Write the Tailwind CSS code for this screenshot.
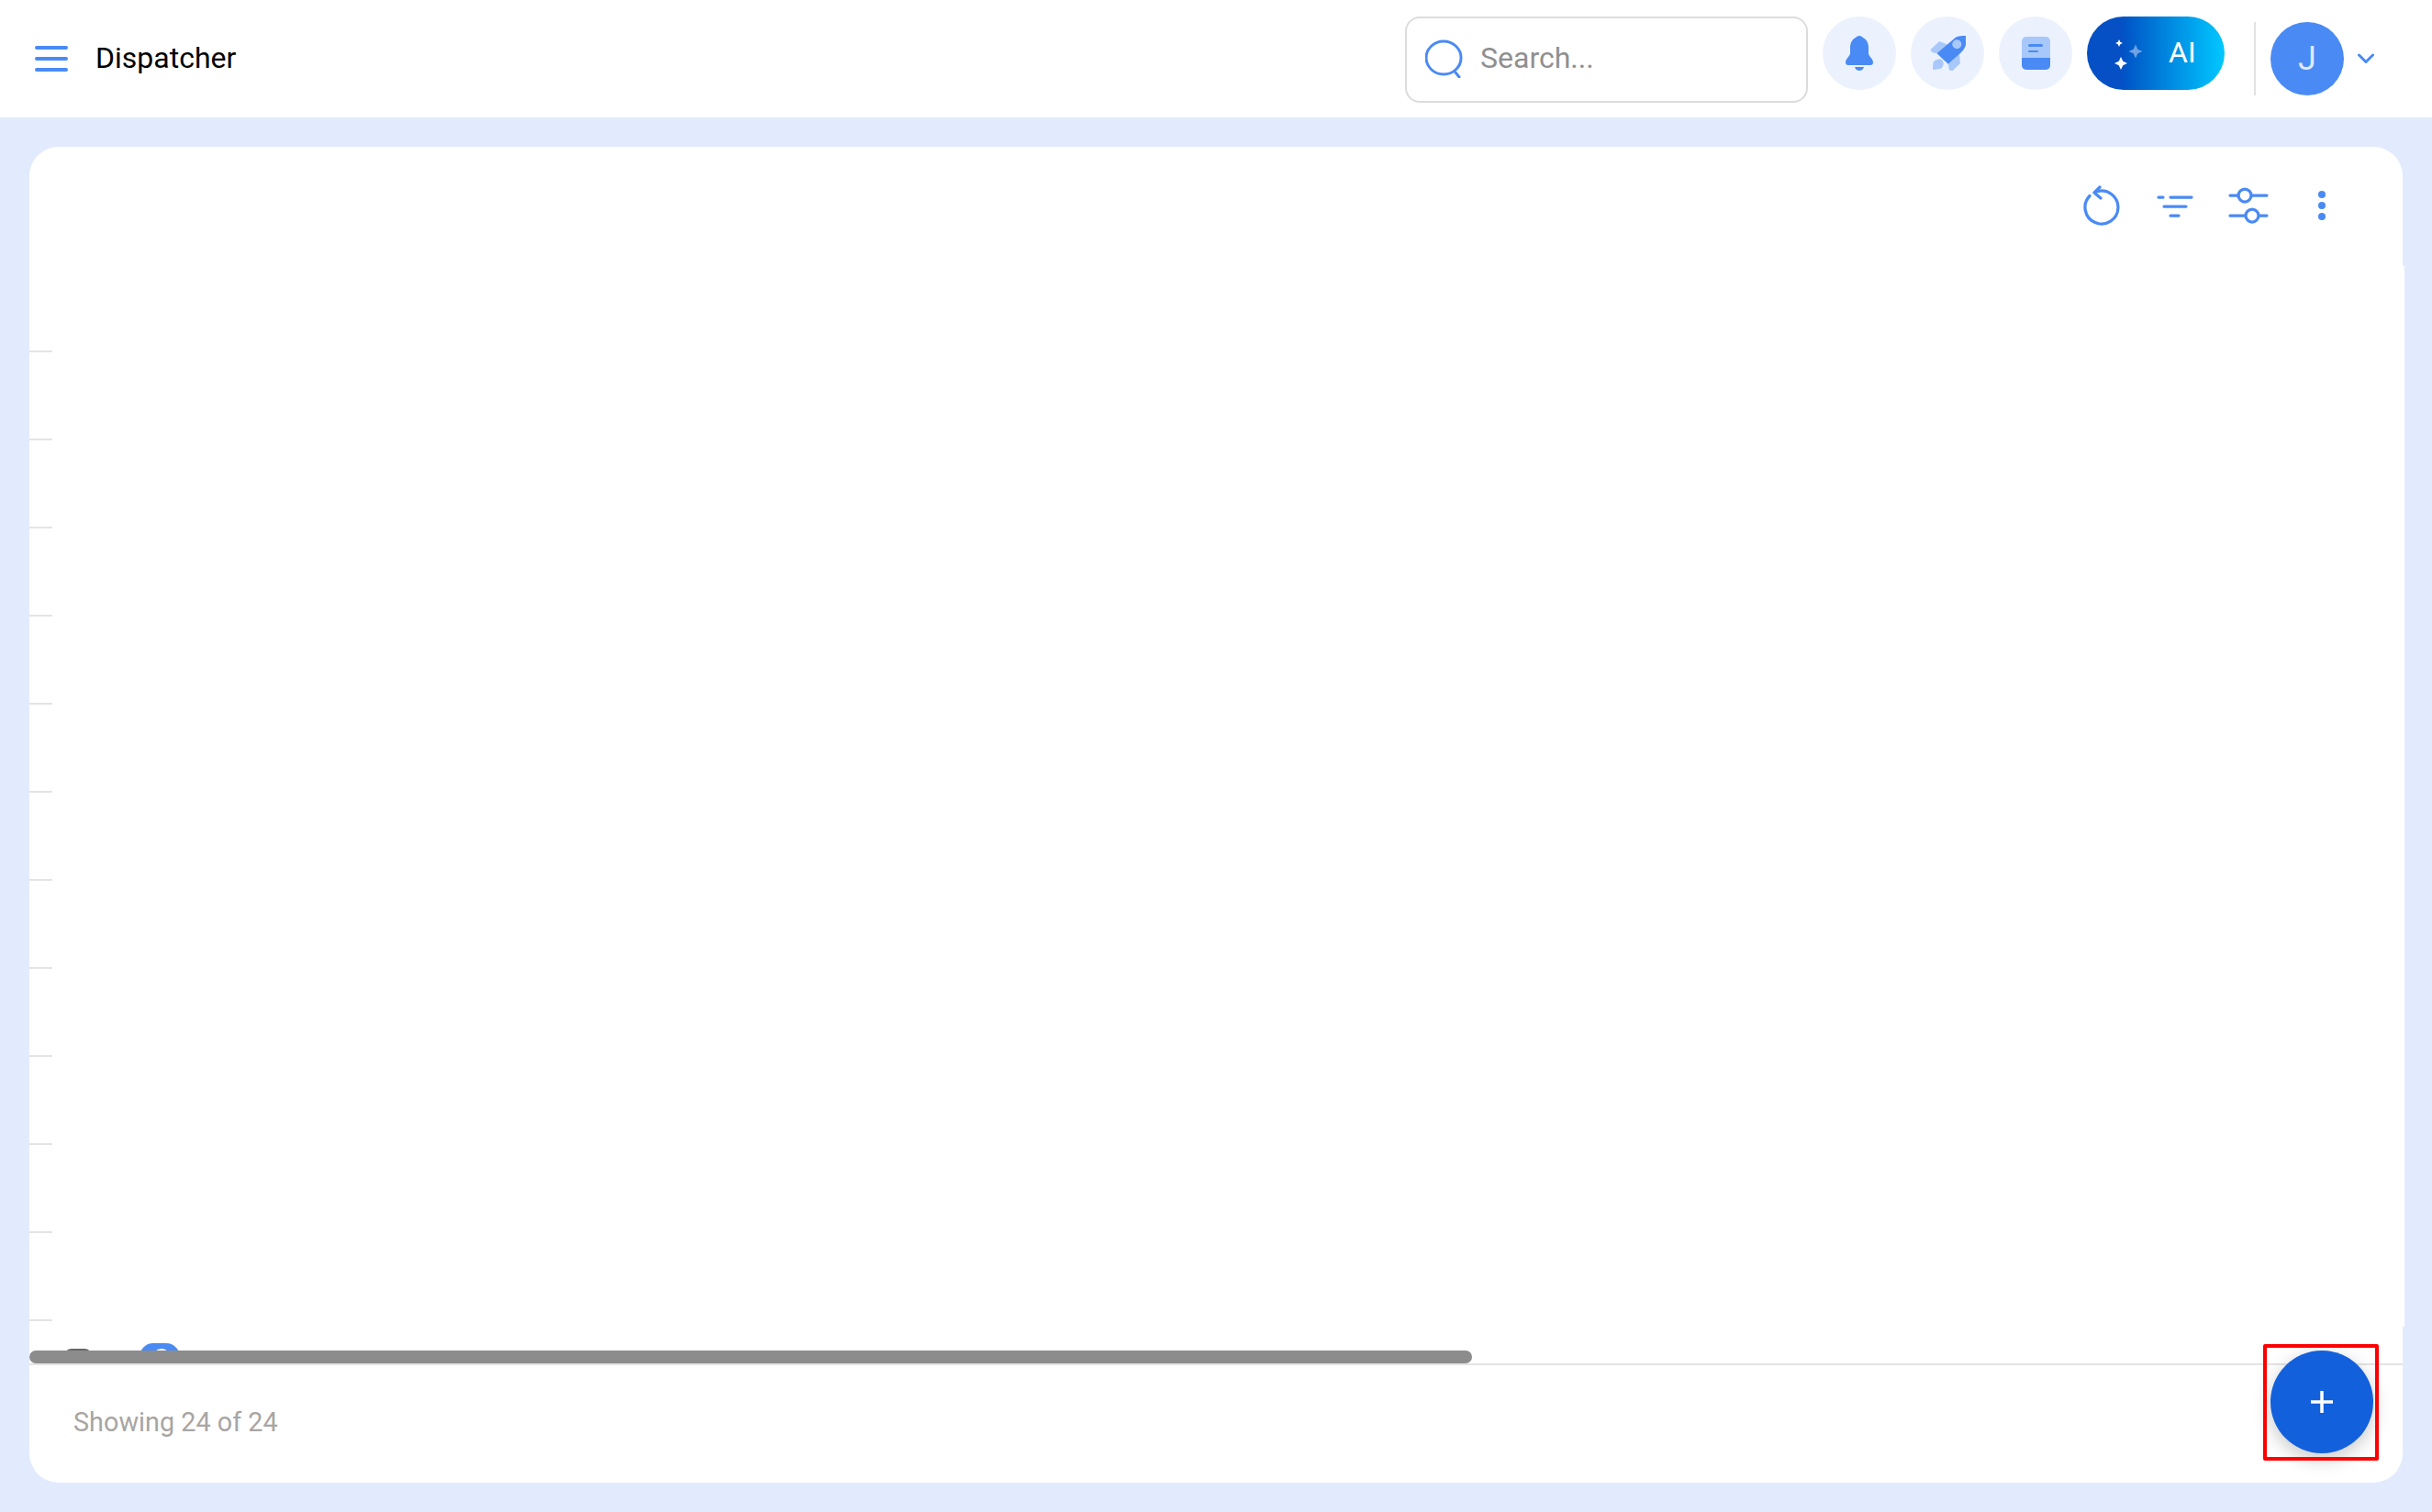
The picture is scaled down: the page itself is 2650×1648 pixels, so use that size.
<!DOCTYPE html>
<html lang="en">
<head>
    <meta charset="UTF-8">
    <meta name="viewport" content="width=device-width, initial-scale=1.0">
    <title>Dispatcher</title>
    <script src="https://cdn.jsdelivr.net/npm/@tailwindcss/browser@4"></script>
</head>
<body class="bg-[#e2ebfd] font-[Roboto,sans-serif] h-[1648px] overflow-hidden relative">
    <!-- header -->
    <header class="h-[128px] bg-white flex items-start pt-[18px] pl-[38px] pr-[63px]">
        <button class="w-[36px] mt-[32px] flex flex-col gap-[8px]">
            <span class="block h-[4px] rounded-full bg-[#4a8af4]"></span>
            <span class="block h-[4px] rounded-full bg-[#4a8af4]"></span>
            <span class="block h-[4px] rounded-full bg-[#4a8af4]"></span>
        </button>
        <div class="ml-[30px] h-[80px] text-[32px] leading-[90px] text-black">Dispatcher</div>

        <div class="ml-auto flex items-start">
            <div class="w-[439px] h-[94px] border-2 border-[#dcdcdc] rounded-[16px] flex items-center pl-[20px] pb-[2px]">
                <svg width="42" height="42" viewBox="0 0 42 42" fill="none" stroke="#4a8af4" stroke-width="3">
                    <ellipse cx="20" cy="20" rx="19" ry="18"/>
                    <path d="M33 36 L37 41" stroke-linecap="round"/>
                </svg>
                <span class="ml-[18px] -mt-[2px] text-[32px] text-[#8f8f8f]">Search...</span>
            </div>
            <div class="ml-[16px] w-[80px] h-[80px] rounded-full bg-[#ebf2fe] flex items-center justify-center">
                <svg width="30" height="38" viewBox="0 0 30 38" fill="#4a8af4">
                    <path d="M15 0 C17 0 18 1 19 2 C23 4 25 8 25 13 L25 19 C25 22 30 25 30 29 C30 31 29 32 27 32 L3 32 C1 32 0 31 0 29 C0 25 5 22 5 19 L5 13 C5 8 7 4 11 2 C12 1 13 0 15 0 Z"/>
                    <path d="M10 34 L20 34 C19 37 17 38 15 38 C13 38 11 37 10 34 Z"/>
                </svg>
            </div>
            <div class="ml-[16px] w-[80px] h-[80px] rounded-full bg-[#ebf2fe] flex items-center justify-center">
                <svg width="40" height="40" viewBox="0 0 40 40">
                    <path fill="#a9c8fa" d="M11.3 7 L1.5 16 L3.3 19.3 L10.3 20.3 L20.8 11 Z"/>
                    <path fill="#a9c8fa" d="M33 21 L34 31 L25.4 39.3 L21.9 38.3 L20.8 31.7 Z"/>
                    <path fill="#a9c8fa" d="M5 29.3 C7 27 11 26 13.8 27 C16 29 16 31 15.5 32.7 C15 35 13 37 12 37 L4.3 38.3 C4 35 4 32 5 29.3 Z"/>
                    <path fill="#4a8af4" d="M8.5 20.3 L28.9 2.7 C32 1 36 1 40 1 L40 11 C39 15 36 18 33 21 L20.8 31.7 Z"/>
                    <circle fill="#a9c8fa" cx="30.3" cy="10.3" r="5"/>
                </svg>
            </div>
            <div class="ml-[16px] w-[80px] h-[80px] rounded-full bg-[#ebf2fe] flex items-center justify-center">
                <div class="w-[31px] h-[36px] rounded-[5px] overflow-hidden bg-[#a9c8fa] flex flex-col">
                    <span class="block ml-[7px] mt-[8px] w-[16px] h-[2.5px] rounded-full bg-[#4a8af4]"></span>
                    <span class="block ml-[7px] mt-[4px] w-[11px] h-[2.5px] rounded-full bg-[#4a8af4]"></span>
                    <span class="block mt-auto h-[13px] bg-[#4a8af4]"></span>
                </div>
            </div>
            <div class="ml-[16px] w-[150px] h-[80px] rounded-full bg-linear-to-r from-[#0450c4] from-25% to-[#00c8ff] flex items-center">
                <svg class="ml-[25px] overflow-visible" width="36" height="38" viewBox="0 0 36 38">
                    <path fill="#ffffff" d="M10 4 L11.3 6.7 L14 8 L11.3 9.3 L10 12 L8.7 9.3 L6 8 L8.7 6.7 Z"/>
                    <path fill="#6fa3e6" d="M28 9.5 L30.3 14.7 L35.5 17 L30.3 19.3 L28 24.5 L25.7 19.3 L20.5 17 L25.7 14.7 Z"/>
                    <path fill="#ffffff" d="M12 23 L14.3 27.7 L19 30 L14.3 32.3 L12 37 L9.7 32.3 L5 30 L9.7 27.7 Z"/>
                </svg>
                <span class="ml-[28px] text-[32px] text-white leading-none -mt-[2px]">AI</span>
            </div>
            <div class="ml-[32px] mt-[6px] w-[2px] h-[80px] bg-[#e2e2e2]"></div>
            <div class="ml-[16px] mt-[6px] w-[80px] h-[80px] rounded-full bg-[#4a8af4] flex items-center justify-center text-[36px] text-[#dfe8fc]">J</div>
            <svg class="ml-[15px] mt-[40px]" width="18" height="12" viewBox="0 0 18 12" fill="none" stroke="#4a8af4" stroke-width="3" stroke-linecap="round" stroke-linejoin="round">
                <path d="M1.5 2 L9 9.5 L16.5 2"/>
            </svg>
        </div>
    </header>

    <!-- card -->
    <main class="pt-[32px] pl-[32px]">
        <div class="w-[2586px] h-[1456px] bg-white rounded-[32px] flex flex-col">
            <div class="h-[130px] flex items-start justify-end gap-[40px] pt-[40px] pr-[68px]">
                <svg width="40" height="48" viewBox="0 0 40 48" fill="none" stroke="#4a8af4" stroke-width="3.25" stroke-linecap="round" stroke-linejoin="round">
                    <path d="M7 13.5 A18 18 0 1 0 14 9"/>
                    <path d="M18 4 L12 10 L19 16"/>
                </svg>
                <svg width="40" height="48" viewBox="0 0 40 48" fill="none" stroke="#4a8af4" stroke-width="3.25" stroke-linecap="round">
                    <path d="M2 15 H7 M15 15 H38 M8 25 H32 M15 35 H24"/>
                </svg>
                <svg class="overflow-visible" width="40" height="48" viewBox="0 0 40 48" fill="none" stroke="#4a8af4" stroke-width="3.25" stroke-linecap="round">
                    <path d="M0 13 H9 M24 13 H40 M0 35 H16 M32 35 H40"/>
                    <circle cx="16" cy="13" r="7"/>
                    <circle cx="24" cy="35" r="7"/>
                </svg>
                <svg width="40" height="48" viewBox="0 0 40 48" fill="#4a8af4">
                    <circle cx="20" cy="12" r="4"/>
                    <circle cx="20" cy="24" r="4"/>
                    <circle cx="20" cy="36" r="4"/>
                </svg>
            </div>

            <!-- empty table rows, only the tick of each border shows -->
            <div class="w-[2588px] h-[1156px] bg-white flex flex-col">
                <div class="h-[94px] flex items-end"><span class="block w-[25px] h-[2px] bg-[#e4e4e4]"></span></div>
                <div class="h-[96px] flex items-end"><span class="block w-[25px] h-[2px] bg-[#e4e4e4]"></span></div>
                <div class="h-[96px] flex items-end"><span class="block w-[25px] h-[2px] bg-[#e4e4e4]"></span></div>
                <div class="h-[96px] flex items-end"><span class="block w-[25px] h-[2px] bg-[#e4e4e4]"></span></div>
                <div class="h-[96px] flex items-end"><span class="block w-[25px] h-[2px] bg-[#e4e4e4]"></span></div>
                <div class="h-[96px] flex items-end"><span class="block w-[25px] h-[2px] bg-[#e4e4e4]"></span></div>
                <div class="h-[96px] flex items-end"><span class="block w-[25px] h-[2px] bg-[#e4e4e4]"></span></div>
                <div class="h-[96px] flex items-end"><span class="block w-[25px] h-[2px] bg-[#e4e4e4]"></span></div>
                <div class="h-[96px] flex items-end"><span class="block w-[25px] h-[2px] bg-[#e4e4e4]"></span></div>
                <div class="h-[96px] flex items-end"><span class="block w-[25px] h-[2px] bg-[#e4e4e4]"></span></div>
                <div class="h-[96px] flex items-end"><span class="block w-[25px] h-[2px] bg-[#e4e4e4]"></span></div>
                <div class="h-[96px] flex items-end"><span class="block w-[25px] h-[2px] bg-[#e4e4e4]"></span></div>
            </div>

            <!-- clipped row under the scrollbar -->
            <div class="relative h-[40px] overflow-hidden flex items-start pl-[38px]">
                <span class="block mt-[24px] w-[30px] h-[30px] rounded-[8px] bg-[#666666]"></span>
                <span class="block ml-[52px] mt-[18px] w-[44px] h-[30px] rounded-full bg-[#4a8af4] pt-[6px] pl-[14px]">
                    <span class="block w-[20px] h-[20px] rounded-full bg-white"></span>
                </span>
                <div class="absolute left-0 bottom-0 w-[1572px] h-[14px] rounded-full bg-[#8c8c8c]"></div>
            </div>

            <div class="flex-1 border-t-2 border-[#e4e4e4] pl-[48px] pt-[46px] text-[28.8px] leading-[32px] text-[#a8a5a2]">Showing 24 of 24</div>
        </div>
    </main>

    <!-- add button with the red highlight box over it -->
    <button class="absolute left-[2474px] top-[1472px] w-[112px] h-[112px] rounded-full bg-[#1260dc] shadow-[0_6px_20px_rgba(0,0,0,0.22)] flex items-center justify-center">
        <svg width="26" height="26" viewBox="0 0 26 26" stroke="#ffffff" stroke-width="3.5">
            <path d="M13 1 V25 M1 13 H25"/>
        </svg>
    </button>
    <div class="absolute left-[2466px] top-[1465px] w-[126px] h-[127px] border-4 border-[#ff0000] rounded-[2px]"></div>
</body>
</html>
